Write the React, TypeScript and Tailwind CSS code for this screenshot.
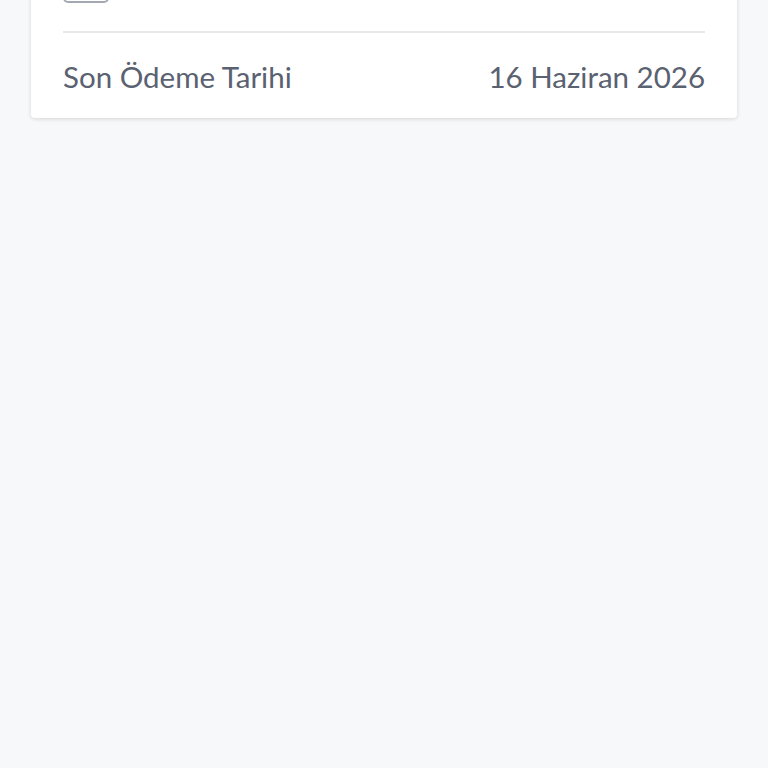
export default function App() {
  return (
    <div className="h-screen overflow-hidden bg-[#f7f8fa] font-['Lato','Noto_Sans',sans-serif]">
      <div className="mx-[31px] -mt-[40px] rounded-[4px] bg-white px-8 pt-[13px] pb-[21px] shadow-[0_1px_4px_rgba(0,0,0,0.14)]">
        <div className="h-[30px] w-[46px] rounded-[5px] border-2 border-[#a3a9b3]" />
        <div className="mt-[28px] h-[2px] bg-[#e6e8eb]" />
        <div className="flex items-center justify-between pt-[24px] text-[29.5px] leading-[40px] text-[#5a6170]">
          <span>Son Ödeme Tarihi</span>
          <span>16 Haziran 2026</span>
        </div>
      </div>
    </div>
  );
}
